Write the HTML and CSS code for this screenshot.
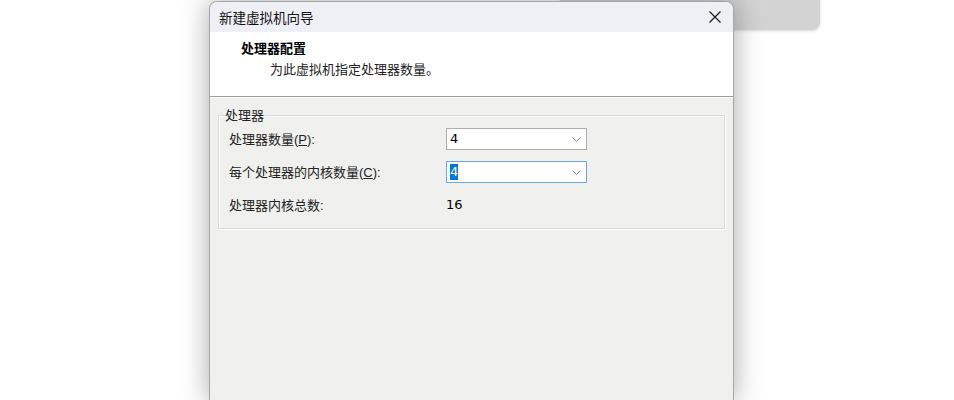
FILE: index.html
```html
<!DOCTYPE html>
<html lang="zh-CN">
<head>
    <meta charset="UTF-8">
    <title>新建虚拟机向导</title>
    <link rel="stylesheet" href="styles.css">
</head>
<body>
    <div class="back-window"></div>

    <div class="wizard">
        <div class="title-bar">
            <span class="title">新建虚拟机向导</span>
            <svg class="close" width="12" height="12" viewBox="0 0 12 12">
                <path d="M0.5 0.5 L11.5 11.5 M11.5 0.5 L0.5 11.5" stroke="#1a1a1a" stroke-width="1.2" fill="none"/>
            </svg>
        </div>

        <div class="page-header">
            <div class="page-title">处理器配置</div>
            <div class="page-desc">为此虚拟机指定处理器数量。</div>
        </div>

        <div class="page-body">
            <fieldset class="group">
                <legend>处理器</legend>
                <div class="rows">
                    <div class="row">
                        <span class="label">处理器数量<span class="latin">(<u>P</u>):</span></span>
                        <div class="combo">
                            <span class="value">4</span>
                            <svg class="chevron" width="9" height="5" viewBox="0 0 9 5"><path d="M0.5 0.5 L4.5 4.5 L8.5 0.5" stroke="#808080" fill="none"/></svg>
                        </div>
                    </div>
                    <div class="row">
                        <span class="label">每个处理器的内核数量<span class="latin">(<u>C</u>):</span></span>
                        <div class="combo focused">
                            <span class="value selected">4</span>
                            <svg class="chevron" width="9" height="5" viewBox="0 0 9 5"><path d="M0.5 0.5 L4.5 4.5 L8.5 0.5" stroke="#808080" fill="none"/></svg>
                        </div>
                    </div>
                    <div class="row">
                        <span class="label">处理器内核总数<span class="latin">:</span></span>
                        <span class="total">16</span>
                    </div>
                </div>
            </fieldset>
        </div>
    </div>
</body>
</html>
```

FILE: styles.css
```css
body {
    margin: 0;
    width: 954px;
    height: 400px;
    overflow: hidden;
    background-color: #ffffff;
    position: relative;
    font-family: "Noto Sans CJK SC", sans-serif;
    font-size: 13px;
    color: #1a1a1a;
}

/* window sitting behind the wizard */
.back-window {
    position: absolute;
    top: -10px;
    left: 560px;
    width: 260px;
    height: 40px;
    background: #d3d3d3;
    border-radius: 0 0 8px 8px;
    box-shadow: 0 1px 3px rgba(0, 0, 0, 0.15);
}

.wizard {
    position: absolute;
    top: 1px;
    left: 209px;
    width: 523px;
    height: 399px;
    display: flex;
    flex-direction: column;
    border: 1px solid #a6a6a6;
    border-bottom: none;
    border-radius: 8px 8px 0 0;
    overflow: hidden;
    box-shadow: 0 0 28px rgba(0, 0, 0, 0.34);
    background: #f0f0ee;
}

.title-bar {
    height: 30px;
    display: flex;
    align-items: center;
    justify-content: space-between;
    padding: 0 12px 0 9px;
    background: #eff0f5;
}

.title {
    font-size: 13.5px;
    line-height: 18px;
    color: #111;
}

.page-header {
    height: 65px;
    box-sizing: border-box;
    padding: 7px 0 0 31px;
    background: #ffffff;
    border-bottom: 1px solid #a0a0a0;
    box-shadow: 0 1px 0 #ffffff;
}

.page-title {
    font-weight: bold;
    line-height: 18px;
    color: #000;
}

.page-desc {
    margin-top: 3px;
    padding-left: 29px;
    line-height: 18px;
    color: #222;
}

.page-body {
    flex: 1;
    padding: 9px 8px 0 8px;
    border-top: 1px solid #ffffff;
}

.group {
    margin: 0;
    padding: 0 0 12px 6px;
    border: 1px solid #d8d8d6;
    box-shadow: inset 1px 1px 0 #ffffff, 1px 1px 0 #ffffff;
}

.group legend {
    padding: 0;
    line-height: 16px;
    color: #222;
}

.rows {
    display: flex;
    flex-direction: column;
    gap: 11px;
    padding: 5px 0 0 4px;
}

.row {
    display: flex;
    align-items: center;
    height: 22px;
}

.label {
    width: 217px;
    line-height: 18px;
    color: #222;
}

.latin {
    font-family: "Liberation Sans", sans-serif;
    font-size: 13px;
}

.combo {
    width: 131px;
    height: 20px;
    display: flex;
    align-items: center;
    justify-content: space-between;
    padding: 0 5px 0 3px;
    background: #ffffff;
    border: 1px solid #adadad;
}

.combo.focused {
    border-color: #6aa6e0;
}

.value,
.total {
    font-family: "DejaVu Sans", sans-serif;
    font-size: 13px;
    line-height: 16px;
    color: #000;
}

.value.selected {
    background: #0078d7;
    color: #ffffff;
}

.chevron {
    display: block;
}
```
